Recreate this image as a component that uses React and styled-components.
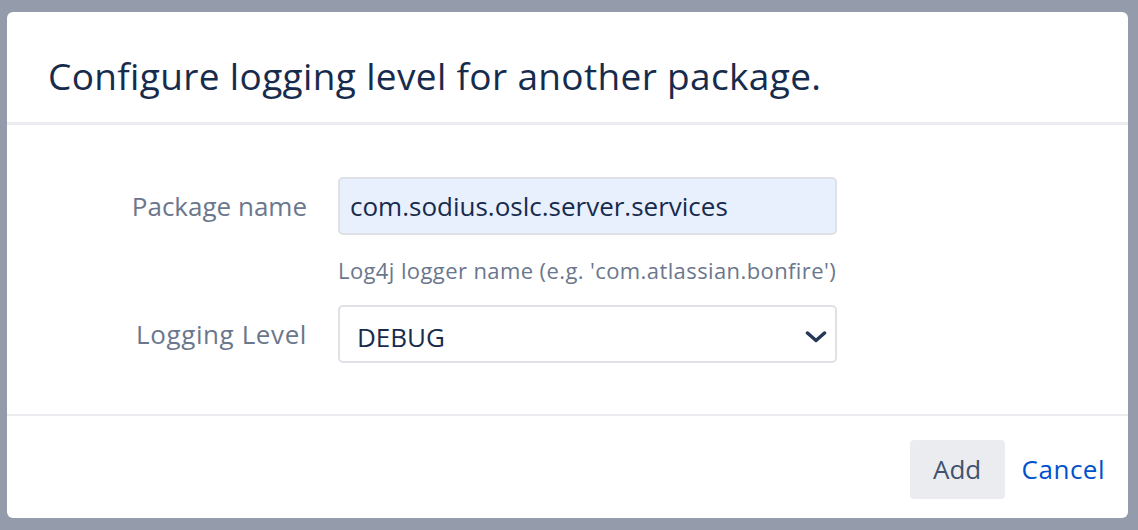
import styled, { createGlobalStyle } from 'styled-components';

const GlobalStyle = createGlobalStyle`
	html, body {
		margin: 0;
		padding: 0;
		background: #949bab;
		font-family: "Open Sans", "Noto Sans", "Liberation Sans", sans-serif;
	}
`

const Backdrop = styled.div`
	width: 1138px;
	height: 530px;
	padding: 12px 0 0 7px;
	box-sizing: border-box;
`

const Dialog = styled.div`
	width: 1121px;
	height: 506px;
	background: #fff;
	border-radius: 6px;
	display: flex;
	flex-direction: column;
	overflow: hidden;
`

const Header = styled.header`
	height: 113px;
	flex-shrink: 0;
	box-sizing: border-box;
	padding: 0 0 0 41px;
	display: flex;
	align-items: center;
	border-bottom: 3px solid #ebecf0;

	h2 {
		margin: 0;
		font-size: 37px;
		font-weight: 400;
		letter-spacing: 0.35px;
		color: #172b4d;
		padding-top: 16px;
	}
`

const Body = styled.div`
	height: 291px;
	flex-shrink: 0;
	box-sizing: border-box;
	padding-top: 52px;
	border-bottom: 2px solid #ebecf0;
	display: flex;
	flex-direction: column;
`

const Row = styled.div`
	display: grid;
	grid-template-columns: 300px 499px;
	column-gap: 31px;
	align-items: center;
`

const Label = styled.label`
	text-align: right;
	font-size: 26px;
	color: #6b778c;
	letter-spacing: ${props => props.$spacing || 0}px;
`

const Field = styled.div`
	height: 58px;
	box-sizing: border-box;
	border: 2px solid #dfe1e6;
	border-radius: 5px;
	background: ${props => props.$bg || '#fff'};
	display: flex;
	align-items: center;
	justify-content: space-between;
	padding: ${props => props.$pad || '0 0 0 10px'};
	font-size: 26px;
	color: #172b4d;
`

const Help = styled.div`
	grid-column: 2;
	font-size: 22px;
	color: #6b778c;
	letter-spacing: 0.4px;
	white-space: nowrap;
	height: 70px;
	box-sizing: border-box;
	padding-top: 20px;
`

const Footer = styled.footer`
	flex: 1;
	display: flex;
	justify-content: flex-end;
	align-items: center;
	gap: 17px;
	padding: 4px 23px 0 0;
`

const Button = styled.button`
	width: 95px;
	height: 59px;
	border: none;
	border-radius: 4px;
	background: #ebecf0;
	color: #42526e;
	font-family: inherit;
	font-size: 26px;
	cursor: pointer;
`

const LinkButton = styled.a`
	color: #0052cc;
	font-size: 26px;
	letter-spacing: 0.5px;
	text-decoration: none;
	cursor: pointer;
`

function Chevron() {
	return (
		<svg width="22" height="12" viewBox="0 0 22 12">
			<path d="M2.5 2 L11 9.5 L19.5 2" fill="none" stroke="#253858" strokeWidth="3.5" strokeLinecap="round" strokeLinejoin="round" />
		</svg>
	)
}

export default function App() {
	return (
		<>
			<GlobalStyle />
			<Backdrop>
				<Dialog>
					<Header>
						<h2>Configure logging level for another package.</h2>
					</Header>
					<Body>
						<Row>
							<Label>Package name</Label>
							<Field $bg="#e8f0fe">com.sodius.oslc.server.services</Field>
						</Row>
						<Row>
							<span />
							<Help>Log4j logger name (e.g. 'com.atlassian.bonfire')</Help>
						</Row>
						<Row>
							<Label $spacing={0.6}>Logging Level</Label>
							<Field $pad="6px 8px 0 17px">
								<span>DEBUG</span>
								<Chevron />
							</Field>
						</Row>
					</Body>
					<Footer>
						<Button>Add</Button>
						<LinkButton>Cancel</LinkButton>
					</Footer>
				</Dialog>
			</Backdrop>
		</>
	)
}
